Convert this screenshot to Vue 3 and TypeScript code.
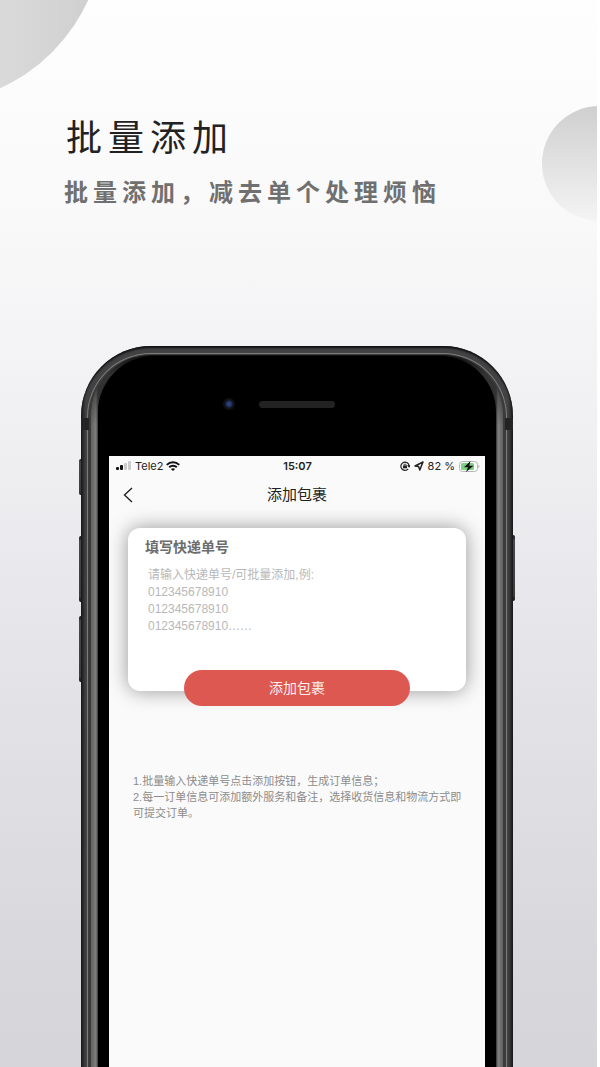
<script setup lang="ts">
import { ref } from 'vue'

const trackingNumbers = ref<string>('')
const placeholder: string = [
  '请输入快递单号/可批量添加,例:',
  '012345678910',
  '012345678910',
  '012345678910……',
].join('\n')

const notes: string[] = [
  '1.批量输入快递单号点击添加按钮，生成订单信息；',
  '2.每一订单信息可添加额外服务和备注，选择收货信息和物流方式即可提交订单。',
]
</script>

<template>
  <main class="stage">
    <span class="orb orb-left" aria-hidden="true"></span>
    <span class="orb orb-right" aria-hidden="true"></span>

    <header class="headline">
      <h1>批量添加</h1>
      <p>批量添加，减去单个处理烦恼</p>
    </header>

    <section class="phone">
      <span class="key key-mute"></span>
      <span class="key key-up"></span>
      <span class="key key-down"></span>
      <span class="key key-power"></span>
      <div class="shell">
        <span class="band band-left"></span>
        <span class="band band-right"></span>
        <div class="rim">
          <div class="groove">
            <div class="edge">
              <div class="glass">
                <div class="bezel">
                  <span class="camera"></span>
                  <span class="speaker"></span>
                </div>
                <div class="screen">
                  <div class="status">
                    <div class="carrier">
                      <svg width="17" height="10" viewBox="0 0 17 10" aria-hidden="true">
                        <rect x="1" y="6" width="3" height="3" rx="1" fill="#111" />
                        <rect x="5" y="4" width="3" height="5" rx="1" fill="#111" />
                        <rect x="9" y="2" width="3" height="7" rx="1" fill="#ccc" />
                        <rect x="13" y="0" width="3" height="9" rx="1" fill="#ccc" />
                      </svg>
                      <span>Tele2</span>
                      <svg width="14" height="10" viewBox="0 0 14 10" aria-hidden="true" fill="none" stroke="#111" stroke-width="2">
                        <path d="M.8 3.9C4.3.4 9.7.4 13.2 3.9" />
                        <path d="M3.2 6.3C5.3 4.2 8.7 4.2 10.8 6.3" />
                        <path d="M7 10 4.9 7.9C6.1 6.9 7.900 6.900 9.100 7.900Z" fill="#111" stroke="none" />
                      </svg>
                    </div>
                    <span class="time">15:07</span>
                    <div class="power">
                      <svg width="10" height="10" viewBox="0 0 10 10" aria-hidden="true" fill="none" stroke="#222" stroke-width="1.2">
                        <path d="M8.200 7.800A4.100 4.100 0 1 1 9.100 5M7.600 4.400 9.100 5.800 10 4.200" />
                        <rect x="3" y="4.500" width="4" height="2.800" fill="#222" stroke="none" />
                        <path d="M4 4.800V4a1 1 0 0 1 2 0v.8" stroke-width=".9" />
                      </svg>
                      <svg width="10" height="10" viewBox="0 0 10 10" aria-hidden="true" fill="none" stroke="#222" stroke-width="1.500" stroke-linejoin="round">
                        <path d="M9 1 1 5 4.600 5.500 5.800 9Z" />
                      </svg>
                      <span>82 %</span>
                      <svg class="battery" width="21" height="11" viewBox="0 0 21 11" aria-hidden="true">
                        <rect x=".5" y=".5" width="18" height="10" rx="3" fill="#fafafa" stroke="#b4b8b4" />
                        <rect x="2" y="2" width="13" height="7" rx="1.500" fill="#7fd083" />
                        <path d="M19.500 3.800v3.400c1.300-.6 1.300-2.800 0-3.400Z" fill="#aaa" />
                        <path d="M11.500 0 5 6.300h4L7 11 14.500 4.700h-4.200Z" fill="#111" />
                      </svg>
                    </div>
                  </div>

                  <nav class="nav">
                    <button type="button" class="back" aria-label="返回">
                      <svg width="10" height="16" viewBox="0 0 10 16" fill="none" stroke="#222" stroke-width="1.400">
                        <path d="M9 1 1.500 8 9 15" />
                      </svg>
                    </button>
                    <h2>添加包裹</h2>
                  </nav>

                  <form class="form" @submit.prevent>
                    <div class="card">
                      <label for="numbers">填写快递单号</label>
                      <textarea id="numbers" v-model="trackingNumbers" :placeholder="placeholder"></textarea>
                    </div>
                    <button type="submit" class="submit">添加包裹</button>
                  </form>

                  <div class="notes">
                    <p v-for="note in notes" :key="note">{{ note }}</p>
                  </div>
                </div>
              </div>
            </div>
          </div>
        </div>
      </div>
    </section>
  </main>
</template>

<style>
body {
  margin: 0;
  background: #fff;
}
</style>

<style scoped>
.stage {
  position: relative;
  display: flex;
  flex-direction: column;
  min-height: 100vh;
  margin-right: 3px;
  overflow: hidden;
  background: linear-gradient(#fefefe 0%, #f9f9fa 20%, #f1f1f3 38%, #e3e2e7 65%, #d8d7dc 90%, #d6d5da 100%);
  font-family: "Liberation Sans", "Noto Sans CJK SC", sans-serif;
}

.orb {
  position: absolute;
  border-radius: 50%;
}

.orb-left {
  top: -250px;
  left: -250px;
  width: 354px;
  height: 354px;
  background: linear-gradient(to right, #dadada 70%, #cecece);
}

.orb-right {
  top: 106px;
  right: -60px;
  width: 115px;
  height: 115px;
  background: linear-gradient(#cfcfcf, #f4f4f4);
}

.headline {
  position: relative;
  padding: 117px 0 137px 64px;
}

.headline h1 {
  margin: 0 0 16px;
  padding-left: 2px;
  font-size: 36px;
  font-weight: 400;
  line-height: 44px;
  letter-spacing: 6px;
  color: #222;
}

.headline p {
  margin: 0;
  font-size: 24px;
  font-weight: 700;
  line-height: 32px;
  letter-spacing: 5px;
  white-space: nowrap;
  color: #707070;
}

.phone {
  position: relative;
  flex: 1;
  display: flex;
  margin: 0 84px 0 81px;
}

.key {
  position: absolute;
  left: -2px;
  width: 4px;
  height: 66px;
  border-radius: 2px;
  background: linear-gradient(#151515, #48484a 8%, #3c3c3e 92%, #111);
}

.key-mute {
  top: 113px;
  height: 36px;
}

.key-up {
  top: 190px;
}

.key-down {
  top: 270px;
}

.key-power {
  top: 189px;
  left: auto;
  right: -2px;
}

.shell,
.rim,
.groove,
.edge,
.glass {
  flex: 1;
  display: flex;
  min-width: 0;
  box-sizing: border-box;
}

.shell {
  position: relative;
  padding: 7px 6px 0;
  border-radius: 70px 70px 0 0;
  background: linear-gradient(to right, #1c1c1d, #424244 5px, #424244 calc(100% - 5px), #1c1c1d);
  box-shadow: inset 0 2px 2px #111;
}

.band {
  position: absolute;
  top: 72px;
  left: 0;
  width: 8px;
  height: 12px;
  background: #242425;
}

.band-right {
  left: auto;
  right: 0;
}

.rim {
  padding: 1px 1px 0;
  border-radius: 64px 64px 0 0;
  background: #7c7c7b;
}

.groove {
  padding: 1px 3px 0;
  border-radius: 63px 63px 0 0;
  background: #3b3b3a;
}

.edge {
  padding: 1px 7px 0;
  border-radius: 60px 60px 0 0;
  background: linear-gradient(#111, #333 20px, transparent 70px), linear-gradient(to right, #626360, #80817e 5px, #303030 7px, #303030 calc(100% - 7px), #808080 calc(100% - 5px), #606060);
}

.glass {
  flex-direction: column;
  padding: 0 11px;
  border-radius: 56px 56px 0 0;
  background: #000;
}

.bezel {
  display: grid;
  grid-template-columns: 1fr auto 1fr;
  align-items: center;
  box-sizing: border-box;
  height: 100px;
  padding-bottom: 4px;
}

.camera {
  justify-self: end;
  width: 12px;
  height: 12px;
  margin-right: 24px;
  border-radius: 50%;
  background: radial-gradient(circle, #3a4c86 0, #1d2b58 3px, #0f1118 4px, #101011 6px);
}

.speaker {
  width: 76px;
  height: 7px;
  border-radius: 4px;
  background: #222;
}

.screen {
  flex: 1;
  background: #fafafa;
}

.status {
  display: grid;
  grid-template-columns: 1fr auto 1fr;
  align-items: center;
  height: 20px;
  padding: 0 5px 0 6px;
  font-family: Inter, "Liberation Sans", sans-serif;
  font-size: 11px;
  line-height: 20px;
  color: #222;
}

.carrier,
.power {
  display: flex;
  align-items: center;
  gap: 4px;
}

.carrier {
  gap: 3px;
}

.power {
  justify-content: flex-end;
}

.power span {
  white-space: nowrap;
}

.time {
  font-weight: 600;
}

.nav {
  display: grid;
  grid-template-columns: 1fr auto 1fr;
  align-items: center;
  height: 38px;
}

.back {
  display: flex;
  justify-self: start;
  margin-left: 14px;
  padding: 0;
  border: 0;
  background: none;
}

.nav h2 {
  margin: 0;
  font-size: 15px;
  font-weight: 400;
  line-height: 24px;
  color: #222;
}

.form {
  display: flex;
  flex-direction: column;
  align-items: center;
  padding: 14px 19px 0;
}

.card {
  align-self: stretch;
  display: flex;
  flex-direction: column;
  box-sizing: border-box;
  height: 163px;
  padding: 8px 17px 0;
  border-radius: 12px;
  background: #fff;
  box-shadow: 0 0 20px rgba(0, 0, 0, 0.4);
}

.card label {
  font-size: 14px;
  font-weight: 700;
  line-height: 22px;
  color: #6c6c6c;
}

.card textarea {
  height: 80px;
  margin: 9px 0 0;
  padding: 0 3px;
  border: 0;
  outline: 0;
  resize: none;
  background: none;
  font-family: inherit;
  font-size: 12px;
  line-height: 17px;
  color: #444;
}

.card textarea::placeholder {
  color: #b8b8b8;
  opacity: 1;
}

.submit {
  position: relative;
  width: 67%;
  height: 36px;
  margin-top: -21px;
  padding: 0;
  border: 0;
  border-radius: 18px;
  background: #dd5850;
  font-family: inherit;
  font-size: 14px;
  line-height: 36px;
  color: #fbeeee;
}

.notes {
  padding: 67px 20px 0 24px;
  font-size: 11px;
  line-height: 16px;
  color: #8c8c8c;
}

.notes p {
  margin: 0;
}
</style>
